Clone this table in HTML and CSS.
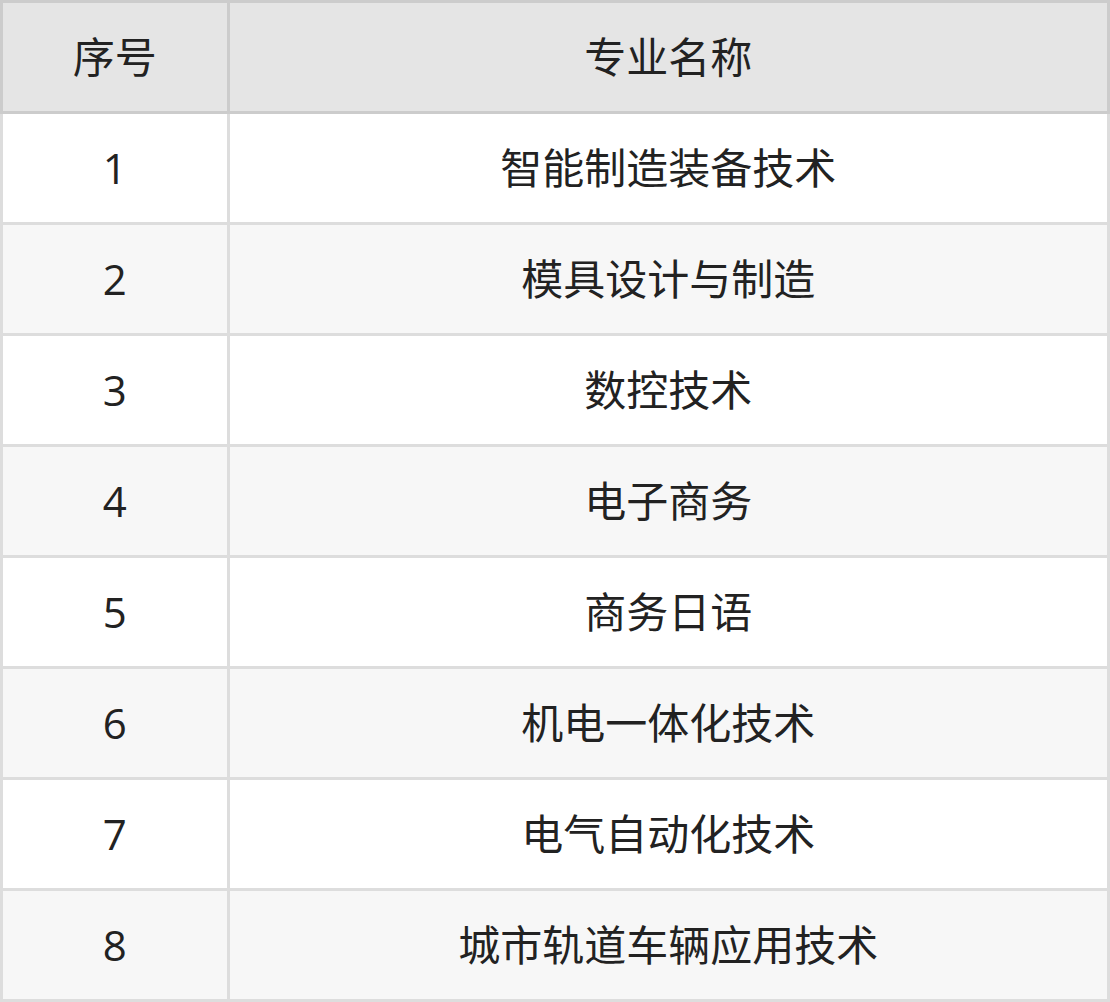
FILE: index.html
```html
<!DOCTYPE html>
<html lang="zh-CN">
<head>
<meta charset="utf-8">
<title>专业名称</title>
<link rel="stylesheet" href="styles.css">
</head>
<body>
<table class="majors">
  <thead>
    <tr><th class="col-no">序号</th><th>专业名称</th></tr>
  </thead>
  <tbody>
    <tr><td>1</td><td>智能制造装备技术</td></tr>
    <tr><td>2</td><td>模具设计与制造</td></tr>
    <tr><td>3</td><td>数控技术</td></tr>
    <tr><td>4</td><td>电子商务</td></tr>
    <tr><td>5</td><td>商务日语</td></tr>
    <tr><td>6</td><td>机电一体化技术</td></tr>
    <tr><td>7</td><td>电气自动化技术</td></tr>
    <tr><td>8</td><td>城市轨道车辆应用技术</td></tr>
  </tbody>
</table>
</body>
</html>
```

FILE: styles.css
```css
html, body {
  margin: 0;
  padding: 0;
  background: #ffffff;
}

.majors {
  width: 1110px;
  border-collapse: collapse;
  table-layout: fixed;
  font-family: "Open Sans", "Noto Sans CJK SC", sans-serif;
  font-size: 42px;
  color: #222222;
}

.majors th,
.majors td {
  height: 108px;
  padding: 0;
  text-align: center;
  vertical-align: middle;
  font-weight: normal;
  line-height: 1;
}

.majors th {
  background: #e5e5e5;
  border: 3px solid #cccccc;
}

.majors td {
  border: 3px solid #dddddd;
}

.majors tbody tr:nth-child(even) td {
  background: #f7f7f7;
}

.col-no {
  width: 223.5px;
}
```
